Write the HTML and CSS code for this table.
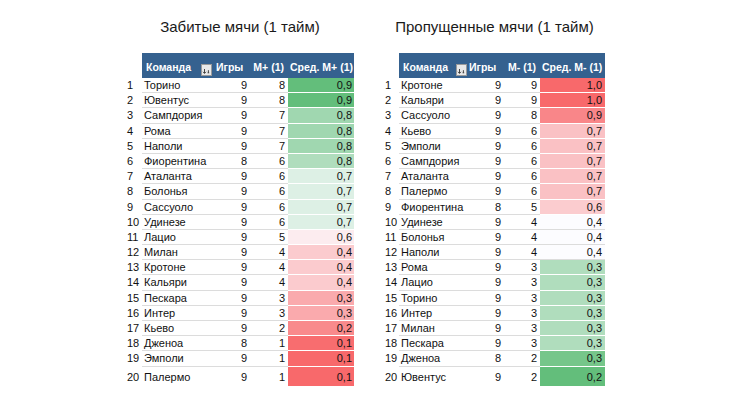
FILE: index.html
```html
<!DOCTYPE html>
<html lang="ru">
<head>
<meta charset="utf-8">
<link rel="stylesheet" href="styles.css">
</head>
<body>
<div class="page">
  <section class="panel left">
    <h2 class="title">Забитые мячи (1 тайм)</h2>
    <div class="tbl">
      <div class="row head">
        <span class="rk"></span>
        <span class="c name">Команда<span class="filter"><svg width="11" height="12" viewBox="0 0 11 12"><rect x="0.5" y="0.5" width="10" height="11" fill="#e9e9e9" stroke="#9a9a9a"/><path d="M3.5 5v4.2M2 7.8l1.5 1.6 1.5-1.6" fill="none" stroke="#333" stroke-width="0.9"/><path d="M6.6 8.8h1.6M7.4 6.2v2.6" fill="none" stroke="#333" stroke-width="0.9"/></svg></span></span>
        <span class="c games">Игры</span>
        <span class="c m">М+ (1)</span>
        <span class="c avg">Сред. М+ (1)</span>
      </div>
      <div class="row"><span class="rk">1</span><span class="c name">Торино</span><span class="c games">9</span><span class="c m">8</span><span class="c avg" style="background:rgb(99,190,123)">0,9</span></div>
      <div class="row"><span class="rk">2</span><span class="c name">Ювентус</span><span class="c games">9</span><span class="c m">8</span><span class="c avg" style="background:rgb(99,190,123)">0,9</span></div>
      <div class="row"><span class="rk">3</span><span class="c name">Сампдория</span><span class="c games">9</span><span class="c m">7</span><span class="c avg" style="background:rgb(160,215,176)">0,8</span></div>
      <div class="row"><span class="rk">4</span><span class="c name">Рома</span><span class="c games">9</span><span class="c m">7</span><span class="c avg" style="background:rgb(160,215,176)">0,8</span></div>
      <div class="row"><span class="rk">5</span><span class="c name">Наполи</span><span class="c games">9</span><span class="c m">7</span><span class="c avg" style="background:rgb(160,215,176)">0,8</span></div>
      <div class="row"><span class="rk">6</span><span class="c name">Фиорентина</span><span class="c games">8</span><span class="c m">6</span><span class="c avg" style="background:rgb(176,221,189)">0,8</span></div>
      <div class="row"><span class="rk">7</span><span class="c name">Аталанта</span><span class="c games">9</span><span class="c m">6</span><span class="c avg" style="background:rgb(221,240,229)">0,7</span></div>
      <div class="row"><span class="rk">8</span><span class="c name">Болонья</span><span class="c games">9</span><span class="c m">6</span><span class="c avg" style="background:rgb(221,240,229)">0,7</span></div>
      <div class="row"><span class="rk">9</span><span class="c name">Сассуоло</span><span class="c games">9</span><span class="c m">6</span><span class="c avg" style="background:rgb(221,240,229)">0,7</span></div>
      <div class="row"><span class="rk">10</span><span class="c name">Удинезе</span><span class="c games">9</span><span class="c m">6</span><span class="c avg" style="background:rgb(221,240,229)">0,7</span></div>
      <div class="row"><span class="rk">11</span><span class="c name">Лацио</span><span class="c games">9</span><span class="c m">5</span><span class="c avg" style="background:rgb(252,236,239)">0,6</span></div>
      <div class="row"><span class="rk">12</span><span class="c name">Милан</span><span class="c games">9</span><span class="c m">4</span><span class="c avg" style="background:rgb(251,203,206)">0,4</span></div>
      <div class="row"><span class="rk">13</span><span class="c name">Кротоне</span><span class="c games">9</span><span class="c m">4</span><span class="c avg" style="background:rgb(251,203,206)">0,4</span></div>
      <div class="row"><span class="rk">14</span><span class="c name">Кальяри</span><span class="c games">9</span><span class="c m">4</span><span class="c avg" style="background:rgb(251,203,206)">0,4</span></div>
      <div class="row"><span class="rk">15</span><span class="c name">Пескара</span><span class="c games">9</span><span class="c m">3</span><span class="c avg" style="background:rgb(250,170,173)">0,3</span></div>
      <div class="row"><span class="rk">16</span><span class="c name">Интер</span><span class="c games">9</span><span class="c m">3</span><span class="c avg" style="background:rgb(250,170,173)">0,3</span></div>
      <div class="row"><span class="rk">17</span><span class="c name">Кьево</span><span class="c games">9</span><span class="c m">2</span><span class="c avg" style="background:rgb(249,138,140)">0,2</span></div>
      <div class="row"><span class="rk">18</span><span class="c name">Дженоа</span><span class="c games">8</span><span class="c m">1</span><span class="c avg" style="background:rgb(248,109,111)">0,1</span></div>
      <div class="row"><span class="rk">19</span><span class="c name">Эмполи</span><span class="c games">9</span><span class="c m">1</span><span class="c avg" style="background:rgb(248,105,107)">0,1</span></div>
      <div class="row last"><span class="rk">20</span><span class="c name">Палермо</span><span class="c games">9</span><span class="c m">1</span><span class="c avg" style="background:rgb(248,105,107)">0,1</span></div>
    </div>
  </section>

  <section class="panel right">
    <h2 class="title">Пропущенные мячи (1 тайм)</h2>
    <div class="tbl">
      <div class="row head">
        <span class="rk"></span>
        <span class="c name">Команда<span class="filter"><svg width="11" height="12" viewBox="0 0 11 12"><rect x="0.5" y="0.5" width="10" height="11" fill="#e9e9e9" stroke="#9a9a9a"/><path d="M3.5 5v4.2M2 7.8l1.5 1.6 1.5-1.6" fill="none" stroke="#333" stroke-width="0.9"/><path d="M6.6 8.8h1.6M7.4 6.2v2.6" fill="none" stroke="#333" stroke-width="0.9"/></svg></span></span>
        <span class="c games">Игры</span>
        <span class="c m">М- (1)</span>
        <span class="c avg">Сред. М- (1)</span>
      </div>
      <div class="row"><span class="rk">1</span><span class="c name">Кротоне</span><span class="c games">9</span><span class="c m">9</span><span class="c avg" style="background:rgb(248,105,107)">1,0</span></div>
      <div class="row"><span class="rk">2</span><span class="c name">Кальяри</span><span class="c games">9</span><span class="c m">9</span><span class="c avg" style="background:rgb(248,105,107)">1,0</span></div>
      <div class="row"><span class="rk">3</span><span class="c name">Сассуоло</span><span class="c games">9</span><span class="c m">8</span><span class="c avg" style="background:rgb(249,134,137)">0,9</span></div>
      <div class="row"><span class="rk">4</span><span class="c name">Кьево</span><span class="c games">9</span><span class="c m">6</span><span class="c avg" style="background:rgb(250,193,196)">0,7</span></div>
      <div class="row"><span class="rk">5</span><span class="c name">Эмполи</span><span class="c games">9</span><span class="c m">6</span><span class="c avg" style="background:rgb(250,193,196)">0,7</span></div>
      <div class="row"><span class="rk">6</span><span class="c name">Сампдория</span><span class="c games">9</span><span class="c m">6</span><span class="c avg" style="background:rgb(250,193,196)">0,7</span></div>
      <div class="row"><span class="rk">7</span><span class="c name">Аталанта</span><span class="c games">9</span><span class="c m">6</span><span class="c avg" style="background:rgb(250,193,196)">0,7</span></div>
      <div class="row"><span class="rk">8</span><span class="c name">Палермо</span><span class="c games">9</span><span class="c m">6</span><span class="c avg" style="background:rgb(250,193,196)">0,7</span></div>
      <div class="row"><span class="rk">9</span><span class="c name">Фиорентина</span><span class="c games">8</span><span class="c m">5</span><span class="c avg" style="background:rgb(251,204,207)">0,6</span></div>
      <div class="row"><span class="rk">10</span><span class="c name">Удинезе</span><span class="c games">9</span><span class="c m">4</span><span class="c avg plain">0,4</span></div>
      <div class="row"><span class="rk">11</span><span class="c name">Болонья</span><span class="c games">9</span><span class="c m">4</span><span class="c avg plain">0,4</span></div>
      <div class="row"><span class="rk">12</span><span class="c name">Наполи</span><span class="c games">9</span><span class="c m">4</span><span class="c avg plain">0,4</span></div>
      <div class="row"><span class="rk">13</span><span class="c name">Рома</span><span class="c games">9</span><span class="c m">3</span><span class="c avg" style="background:rgb(176,221,189)">0,3</span></div>
      <div class="row"><span class="rk">14</span><span class="c name">Лацио</span><span class="c games">9</span><span class="c m">3</span><span class="c avg" style="background:rgb(176,221,189)">0,3</span></div>
      <div class="row"><span class="rk">15</span><span class="c name">Торино</span><span class="c games">9</span><span class="c m">3</span><span class="c avg" style="background:rgb(176,221,189)">0,3</span></div>
      <div class="row"><span class="rk">16</span><span class="c name">Интер</span><span class="c games">9</span><span class="c m">3</span><span class="c avg" style="background:rgb(176,221,189)">0,3</span></div>
      <div class="row"><span class="rk">17</span><span class="c name">Милан</span><span class="c games">9</span><span class="c m">3</span><span class="c avg" style="background:rgb(176,221,189)">0,3</span></div>
      <div class="row"><span class="rk">18</span><span class="c name">Пескара</span><span class="c games">9</span><span class="c m">3</span><span class="c avg" style="background:rgb(176,221,189)">0,3</span></div>
      <div class="row"><span class="rk">19</span><span class="c name">Дженоа</span><span class="c games">8</span><span class="c m">2</span><span class="c avg" style="background:rgb(118,198,138)">0,3</span></div>
      <div class="row last"><span class="rk">20</span><span class="c name">Ювентус</span><span class="c games">9</span><span class="c m">2</span><span class="c avg" style="background:rgb(99,190,123)">0,2</span></div>
    </div>
  </section>
</div>
</body>
</html>
```

FILE: styles.css
```css
* { box-sizing: border-box; }
html, body { margin: 0; padding: 0; background: #fff; }
body {
  font-family: "Liberation Sans", Arial, sans-serif;
  color: #111;
  width: 730px;
  height: 405px;
  overflow: hidden;
}
.page {
  display: flex;
  gap: 30px;
  padding: 17px 0 0 126px;
}
.panel { display: flex; flex-direction: column; }
.left { width: 228px; }
.right { width: 221px; }
.title {
  margin: 0 0 16px;
  height: 20px;
  line-height: 20px;
  font-size: 15px;
  font-weight: normal;
  text-align: center;
  color: #1a1a1a;
  white-space: nowrap;
}
.tbl { display: flex; flex-direction: column; }
.row {
  display: grid;
  height: 15.2px;
  font-size: 11px;
  line-height: 14px;
}
.left .row { grid-template-columns: 16px 71px 36px 39px 66px; }
.right .row { grid-template-columns: 15px 69px 34px 38px 65px; }
.row .rk { padding-left: 1px; white-space: nowrap; }
.row .c {
  border-bottom: 1px solid #dcdcdc;
  white-space: nowrap;
}
.row .name { padding-left: 2px; }
.row .games { text-align: right; padding-right: 2px; }
.right .row .games { padding-right: 1px; }
.row .m { text-align: right; padding-right: 3px; }
.row .avg { text-align: right; padding-right: 2px; border-bottom-color: #fff; }
.right .row .avg { padding-right: 3px; }
.row .avg.plain { background: #fcfcff; border-bottom-color: #dcdcdc; }
.row.last { height: 19px; }
.row.last span { padding-top: 3px; }
.row.last .c { border-bottom: none; }

.row.head {
  height: 25px;
  font-weight: bold;
  font-size: 10.5px;
}
.row.head .c {
  background: #35618f;
  color: #fff;
  border-bottom: none;
  padding-top: 8px;
  line-height: 13px;
}
.row.head .name { position: relative; padding-left: 4px; }
.row.head .games { text-align: left; padding-left: 3px; }
.right .row.head .games { padding-left: 1px; }
.row.head .m { text-align: right; padding-right: 4px; }
.row.head .avg { text-align: left; padding-left: 2px; padding-right: 0; }
.filter {
  position: absolute;
  right: 1px;
  bottom: 2px;
  width: 11px;
  height: 12px;
  display: block;
}
.filter svg { display: block; }
```
